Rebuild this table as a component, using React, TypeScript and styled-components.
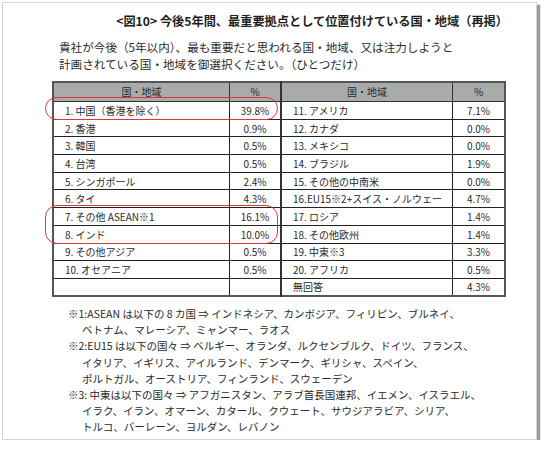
import React from "react";
import styled, { createGlobalStyle } from "styled-components";

const Global = createGlobalStyle`
  html, body { margin: 0; padding: 0; background: #ffffff; }
  body { font-family: "Noto Sans CJK JP", "Noto Sans", sans-serif; color: #222; }
`;

const Card = styled.div`
  margin: 2px 0 0 2px;
  width: 535px;
  height: 438px;
  box-sizing: border-box;
  border: 1px solid #d4d4d4;
  background: #fff;
  box-shadow: 3px 3px 1px #9a9a9a;
  padding: 9px 0 0 0;
`;

const Title = styled.h1`
  margin: 0;
  padding-right: 28px;
  text-align: right;
  font-size: 12.2px;
  line-height: 18px;
  font-weight: 700;
  color: #1e1e1e;
`;

const Lead = styled.p`
  margin: 9px 0 0 56px;
  font-size: 11.6px;
  line-height: 16.5px;
  color: #2a2a2a;
`;

const TableWrap = styled.div`
  position: relative;
  margin: 9px 0 0 49px;
  width: 446px;
`;

const Table = styled.table`
  border-collapse: collapse;
  table-layout: fixed;
  width: 446px;
  border: 2px solid #555;
  font-size: 10px;
  color: #2a2a2a;
`;

const HeadCell = styled.th<{ $w: number; $sep?: boolean }>`
  width: ${(p) => p.$w}px;
  height: 18px;
  padding: 0;
  background: #a9abab;
  border: 1px solid #333;
  ${(p) => (p.$sep ? "border-right: 2px solid #333;" : "")}
  font-weight: 400;
  text-align: center;
  line-height: 16px;
`;

const Row = styled.tr`
  height: 17.7px;
`;

const NameCell = styled.td`
  padding: 0 0 0 11px;
  border: 1px solid #222;
  line-height: 15px;
  white-space: nowrap;
  overflow: hidden;
`;

const PctCell = styled.td<{ $sep?: boolean }>`
  padding: 0;
  border: 1px solid #222;
  ${(p) => (p.$sep ? "border-right: 2px solid #333;" : "")}
  text-align: center;
  line-height: 15px;
`;

const Oval = styled.div<{ $top: number; $h: number }>`
  position: absolute;
  left: -7px;
  top: ${(p) => p.$top}px;
  width: 233px;
  height: ${(p) => p.$h}px;
  box-sizing: border-box;
  border: 1.5px solid #e2343c;
  border-radius: 12px;
  pointer-events: none;
`;

const Notes = styled.div`
  margin: 9px 0 0 65px;
  font-size: 10.5px;
  line-height: 16.2px;
  color: #2a2a2a;
`;

const NoteLine = styled.div<{ $indent?: boolean }>`
  padding-left: ${(p) => (p.$indent ? 14 : 0)}px;
  white-space: nowrap;
`;

const left: [string, string][] = [
  ["1. 中国（香港を除く）", "39.8%"],
  ["2. 香港", "0.9%"],
  ["3. 韓国", "0.5%"],
  ["4. 台湾", "0.5%"],
  ["5. シンガポール", "2.4%"],
  ["6. タイ", "4.3%"],
  ["7. その他 ASEAN※1", "16.1%"],
  ["8. インド", "10.0%"],
  ["9. その他アジア", "0.5%"],
  ["10. オセアニア", "0.5%"],
  ["", ""],
];

const right: [string, string][] = [
  ["11. アメリカ", "7.1%"],
  ["12. カナダ", "0.0%"],
  ["13. メキシコ", "0.0%"],
  ["14. ブラジル", "1.9%"],
  ["15. その他の中南米", "0.0%"],
  ["16.EU15※2+スイス・ノルウェー", "4.7%"],
  ["17. ロシア", "1.4%"],
  ["18. その他欧州", "1.4%"],
  ["19. 中東※3", "3.3%"],
  ["20. アフリカ", "0.5%"],
  ["無回答", "4.3%"],
];

const notes: { text: string; indent?: boolean }[] = [
  { text: "※1:ASEAN は以下の 8 カ国 ⇒ インドネシア、カンボジア、フィリピン、ブルネイ、" },
  { text: "ベトナム、マレーシア、ミャンマー、ラオス", indent: true },
  { text: "※2:EU15 は以下の国々 ⇒ ベルギー、オランダ、ルクセンブルク、ドイツ、フランス、" },
  { text: "イタリア、イギリス、アイルランド、デンマーク、ギリシャ、スペイン、", indent: true },
  { text: "ポルトガル、オーストリア、フィンランド、スウェーデン", indent: true },
  { text: "※3: 中東は以下の国々 ⇒ アフガニスタン、アラブ首長国連邦、イエメン、イスラエル、" },
  { text: "イラク、イラン、オマーン、カタール、クウェート、サウジアラビア、シリア、", indent: true },
  { text: "トルコ、バーレーン、ヨルダン、レバノン", indent: true },
];

export default function App() {
  return (
    <>
      <Global />
      <Card>
        <Title>&lt;図10&gt; 今後5年間、最重要拠点として位置付けている国・地域（再掲）</Title>
        <Lead>
          貴社が今後（5年以内）、最も重要だと思われる国・地域、又は注力しようと
          <br />
          計画されている国・地域を御選択ください。（ひとつだけ）
        </Lead>
        <TableWrap>
          <Table>
            <thead>
              <tr>
                <HeadCell $w={175}>国・地域</HeadCell>
                <HeadCell $w={50} $sep>%</HeadCell>
                <HeadCell $w={170}>国・地域</HeadCell>
                <HeadCell $w={51}>%</HeadCell>
              </tr>
            </thead>
            <tbody>
              {left.map((l, i) => (
                <Row key={i}>
                  <NameCell>{l[0]}</NameCell>
                  <PctCell $sep>{l[1]}</PctCell>
                  <NameCell>{right[i][0]}</NameCell>
                  <PctCell>{right[i][1]}</PctCell>
                </Row>
              ))}
            </tbody>
          </Table>
          <Oval $top={16} $h={23} />
          <Oval $top={124} $h={39} />
        </TableWrap>
        <Notes>
          {notes.map((n, i) => (
            <NoteLine key={i} $indent={n.indent}>
              {n.text}
            </NoteLine>
          ))}
        </Notes>
      </Card>
    </>
  );
}
